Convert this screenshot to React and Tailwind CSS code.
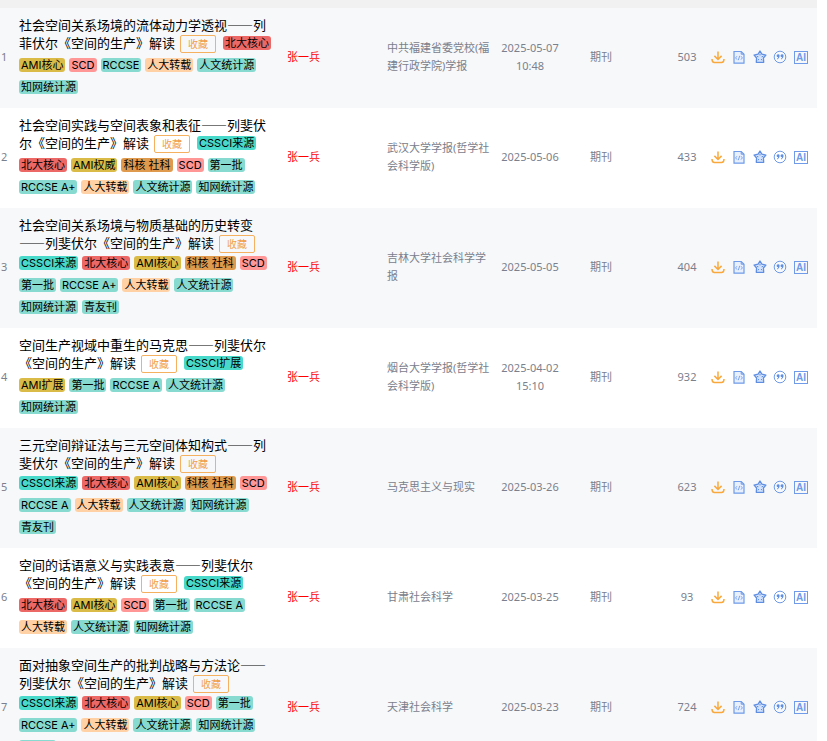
import clsx from 'clsx';

const tagColors = {
  CSSCI来源: 'bg-[#48d9ca]',
  CSSCI扩展: 'bg-[#48d9ca]',
  北大核心: 'bg-[#ec6866]',
  AMI核心: 'bg-[#dabb47]',
  AMI权威: 'bg-[#dabb47]',
  AMI扩展: 'bg-[#dabb47]',
  '科核 社科': 'bg-[#e09a4e]',
  SCD: 'bg-[#ff9797]',
  人大转载: 'bg-[#ffd1a5]',
};

const articles = [
  {
    title: '社会空间关系场境的流体动力学透视——列菲伏尔《空间的生产》解读',
    tags: ['北大核心', 'AMI核心', 'SCD', 'RCCSE', '人大转载', '人文统计源', '知网统计源'],
    source: '中共福建省委党校(福建行政学院)学报',
    date: '2025-05-07 10:48',
    count: 503,
  },
  {
    title: '社会空间实践与空间表象和表征——列斐伏尔《空间的生产》解读',
    tags: ['CSSCI来源', '北大核心', 'AMI权威', '科核 社科', 'SCD', '第一批', 'RCCSE A+', '人大转载', '人文统计源', '知网统计源'],
    source: '武汉大学学报(哲学社会科学版)',
    date: '2025-05-06',
    count: 433,
  },
  {
    title: '社会空间关系场境与物质基础的历史转变——列斐伏尔《空间的生产》解读',
    tags: ['CSSCI来源', '北大核心', 'AMI核心', '科核 社科', 'SCD', '第一批', 'RCCSE A+', '人大转载', '人文统计源', '知网统计源', '青友刊'],
    source: '吉林大学社会科学学报',
    date: '2025-05-05',
    count: 404,
  },
  {
    title: '空间生产视域中重生的马克思——列斐伏尔《空间的生产》解读',
    tags: ['CSSCI扩展', 'AMI扩展', '第一批', 'RCCSE A', '人文统计源', '知网统计源'],
    source: '烟台大学学报(哲学社会科学版)',
    date: '2025-04-02 15:10',
    count: 932,
  },
  {
    title: '三元空间辩证法与三元空间体知构式——列斐伏尔《空间的生产》解读',
    tags: ['CSSCI来源', '北大核心', 'AMI核心', '科核 社科', 'SCD', 'RCCSE A', '人大转载', '人文统计源', '知网统计源', '青友刊'],
    source: '马克思主义与现实',
    date: '2025-03-26',
    count: 623,
  },
  {
    title: '空间的话语意义与实践表意——列斐伏尔《空间的生产》解读',
    tags: ['CSSCI来源', '北大核心', 'AMI核心', 'SCD', '第一批', 'RCCSE A', '人大转载', '人文统计源', '知网统计源'],
    source: '甘肃社会科学',
    date: '2025-03-25',
    count: 93,
  },
  {
    title: '面对抽象空间生产的批判战略与方法论——列斐伏尔《空间的生产》解读',
    tags: ['CSSCI来源', '北大核心', 'AMI核心', 'SCD', '第一批', 'RCCSE A+', '人大转载', '人文统计源', '知网统计源', '青友刊'],
    source: '天津社会科学',
    date: '2025-03-23',
    count: 724,
  },
];

function Icon({ children }) {
  return (
    <svg viewBox="0 0 14 14" className="block w-[14px] h-[14px]" fill="none" stroke="currentColor">
      {children}
    </svg>
  );
}

const actions = [
  {
    label: '下载',
    color: 'text-[#f9a93c]',
    icon: (
      <Icon>
        <path d="M7 1.5v8M3.4 5.9 7 9.5l3.6-3.6" strokeWidth="1.5" />
        <path d="M1 8.9c0 2.2.7 3.5 2.4 3.5h7.2c1.7 0 2.4-1.3 2.4-3.5" strokeWidth="1.5" />
      </Icon>
    ),
  },
  {
    label: 'HTML阅读',
    color: 'text-[#6f9be8]',
    icon: (
      <Icon>
        <path d="M2 1.5h7.2L12 4.2v9H2z" fill="#e8f0fd" strokeWidth="1.2" />
        <path d="M9.2 1.5v2.7H12" strokeWidth="1" />
        <path d="M5 6.2 3.6 7.9 5 9.6M9 6.2l1.4 1.7L9 9.6M7.7 5.8 6.3 10.2" strokeWidth="0.9" />
      </Icon>
    ),
  },
  {
    label: '收藏文献',
    color: 'text-[#5f8fe3]',
    icon: (
      <Icon>
        <path
          d="M7 1 8.9 4.2l4 .9-2.5 2.9.3 4.3H3.3L3.6 8 1.1 5.1l4-.9z"
          fill="#d6e4fb"
          strokeWidth="1.3"
          strokeLinejoin="round"
        />
        <path d="M7 3.8v1.7M3.9 6.3l1.5.5M10.1 6.3l-1.5.5M5 10.3 5.9 9M9 10.3 8.1 9" strokeWidth="1" />
      </Icon>
    ),
  },
  {
    label: '引用',
    color: 'text-[#5f8fe3]',
    icon: (
      <Icon>
        <circle cx="7" cy="7" r="5.8" strokeWidth="0.9" />
        <g fill="currentColor" stroke="none">
          <path d="M3.6 5.7a1.5 1.5 0 0 1 3-.1c.1 1.7-.7 3-2.2 3.8l-.4-.6c.7-.5 1.1-1.1 1.1-1.8-.9 0-1.5-.5-1.5-1.3z" />
          <path d="M7.5 5.7a1.5 1.5 0 0 1 3-.1c.1 1.7-.7 3-2.2 3.8l-.4-.6c.7-.5 1.1-1.1 1.1-1.8-.9 0-1.5-.5-1.5-1.3z" />
        </g>
      </Icon>
    ),
  },
  {
    label: 'AI辅助阅读',
    color: 'text-[#6f9be8]',
    icon: (
      <span className="flex items-center justify-center w-[14px] h-[13px] border border-[#6f9be8] font-['Liberation_Sans',sans-serif] font-bold text-[10px] leading-[11px]">
        AI
      </span>
    ),
  },
];

function Tag({ name }) {
  return (
    <span
      className={clsx(
        "inline-block align-top mt-[2px] mb-[6px] mr-1 h-[14px] px-[2px] rounded-[3px] font-['Inter','Noto_Sans_CJK_SC',sans-serif] text-[11px] leading-[14px] text-black whitespace-nowrap",
        tagColors[name] || 'bg-[#86dacf]'
      )}
    >
      {name}
    </span>
  );
}

function ArticleRow({ article, index }) {
  return (
    <tr className="odd:bg-[#f7f8fa] even:bg-white">
      <td className="pb-[2px] pl-px">{index + 1}</td>
      <td className="py-2 text-[13px]">
        <a href="#" className="text-black font-['Noto_Sans_CJK_SC',sans-serif] [font-feature-settings:'fwid']">
          {article.title}
        </a>
        <button
          type="button"
          className="inline-block align-top my-px ml-[5px] mr-[7px] w-9 h-[18px] border border-[#f5b060] rounded-[2px] text-[10px] leading-[14px] text-[#f0a04b]"
        >
          收藏
        </button>
        {article.tags.map((tag) => (
          <Tag key={tag} name={tag} />
        ))}
      </td>
      <td className="pb-[2px] pl-3">
        <a href="#" className="text-[#ff0000]">
          张一兵
        </a>
      </td>
      <td className="pb-[2px] pl-3">
        <a href="#">{article.source}</a>
      </td>
      <td className="pb-[2px] text-center">{article.date}</td>
      <td className="pb-[2px] pl-[23px]">期刊</td>
      <td className="pb-[2px] text-center">{article.count}</td>
      <td className="pb-[2px] pl-[6px] pr-[9px]">
        <div className="flex items-center justify-between">
          {actions.map(({ label, color, icon }) => (
            <button key={label} type="button" aria-label={label} className={color}>
              {icon}
            </button>
          ))}
        </div>
      </td>
    </tr>
  );
}

function App() {
  return (
    <div className="h-screen overflow-hidden bg-white pr-[10px] font-['Noto_Sans','Noto_Sans_CJK_SC',sans-serif] text-[11px] leading-[18px] text-[#7b808c]">
      <div className="h-2 bg-[#f1f1f1]" />
      <table className="w-full table-fixed border-collapse">
        <colgroup>
          <col className="w-[19px]" />
          <col />
          <col className="w-[100px]" />
          <col className="w-[118px]" />
          <col className="w-[74px]" />
          <col className="w-[102px]" />
          <col className="w-[36px]" />
          <col className="w-[112px]" />
        </colgroup>
        <tbody>
          {articles.map((article, index) => (
            <ArticleRow key={article.title} article={article} index={index} />
          ))}
        </tbody>
      </table>
    </div>
  );
}

export default App;
